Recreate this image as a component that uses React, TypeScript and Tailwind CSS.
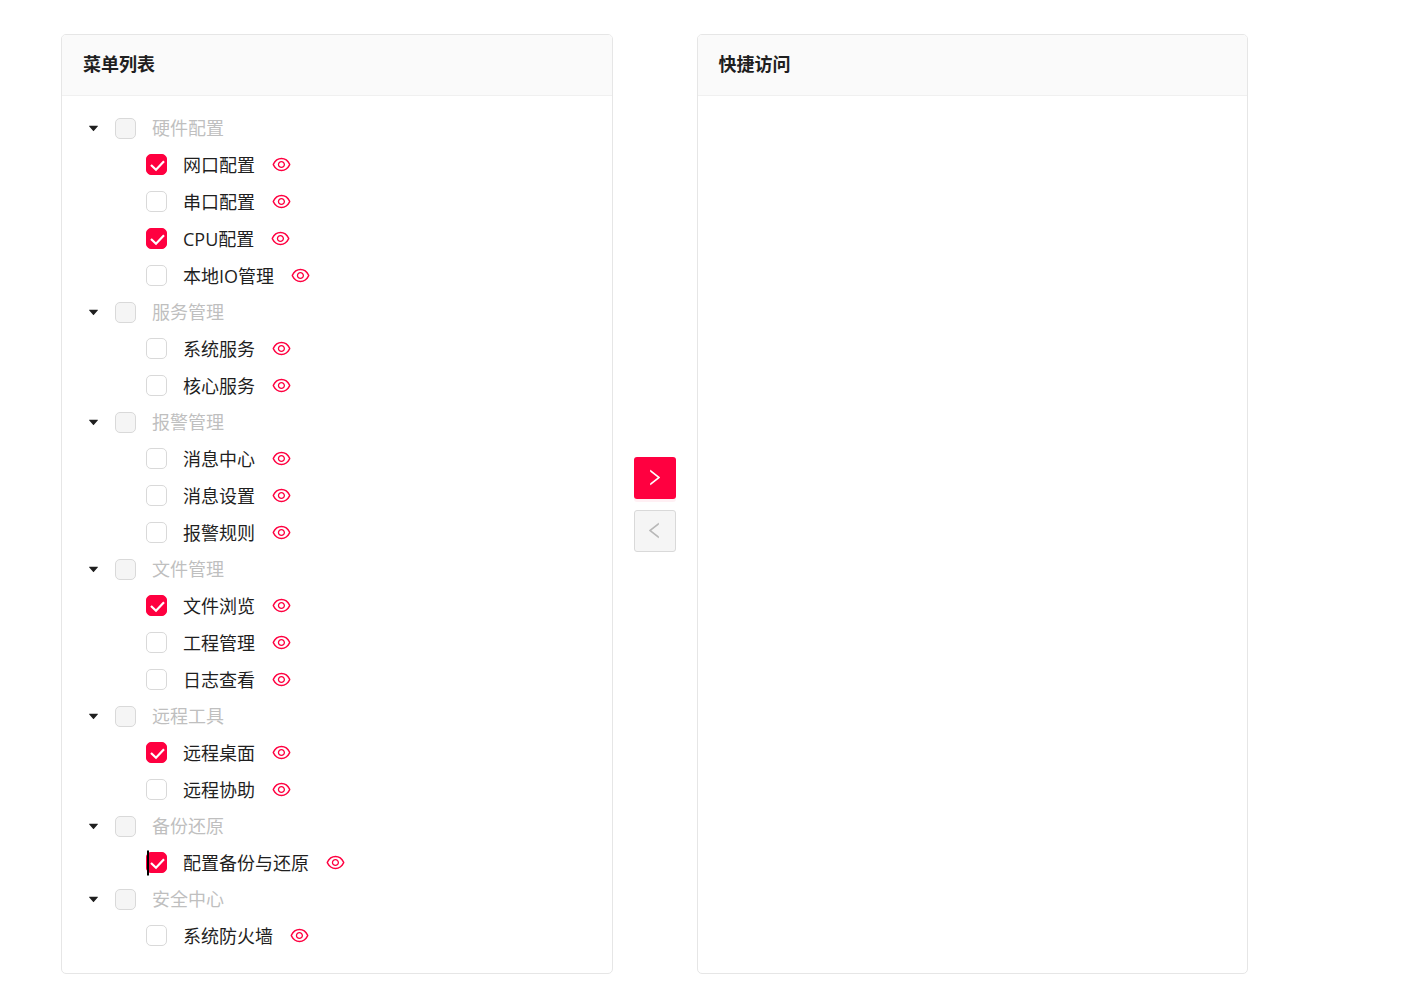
import { useState } from "react";
import { AiFillCaretDown, AiOutlineEye, AiOutlineLeft, AiOutlineRight } from "react-icons/ai";

type MenuGroup = {
  title: string;
  items: string[];
};

const menuGroups: MenuGroup[] = [
  { title: "硬件配置", items: ["网口配置", "串口配置", "CPU配置", "本地IO管理"] },
  { title: "服务管理", items: ["系统服务", "核心服务"] },
  { title: "报警管理", items: ["消息中心", "消息设置", "报警规则"] },
  { title: "文件管理", items: ["文件浏览", "工程管理", "日志查看"] },
  { title: "远程工具", items: ["远程桌面", "远程协助"] },
  { title: "备份还原", items: ["配置备份与还原"] },
  { title: "安全中心", items: ["系统防火墙"] },
];

const caretItem = "配置备份与还原";

function CheckBox({ id, checked, disabled, onChange }: {
  id: string;
  checked: boolean;
  disabled?: boolean;
  onChange?: () => void;
}) {
  return (
    <span className="relative flex shrink-0">
      <input
        id={id}
        type="checkbox"
        checked={checked}
        disabled={disabled}
        readOnly={!onChange}
        onChange={onChange}
        className="peer size-[21px] appearance-none rounded-[5px] border border-[#d9d9d9] bg-white checked:border-[#ff0040] checked:bg-[#ff0040] disabled:bg-[#f5f5f5]"
      />
      <svg
        viewBox="0 0 21 21"
        className="pointer-events-none absolute inset-0 hidden size-[21px] peer-checked:block"
        fill="none"
        stroke="#fff"
        strokeWidth="2.2"
      >
        <path d="M5 11l5 4.8 8-8.6" />
      </svg>
    </span>
  );
}

function Panel({ title, children }: { title: string; children?: React.ReactNode }) {
  return (
    <section className="min-w-0 flex-1 overflow-hidden rounded-[5px] border border-[#e6e6e6] bg-white">
      <h2 className="border-b border-[#f0f0f0] bg-[#fafafa] px-[21px] pt-[15px] pb-[17px] text-lg leading-7 font-bold">{title}</h2>
      {children}
    </section>
  );
}

export default function App() {
  const [checked, setChecked] = useState<string[]>(["网口配置", "CPU配置", "文件浏览", "远程桌面", "配置备份与还原"]);
  const [closed, setClosed] = useState<string[]>([]);

  const toggle = (list: string[], name: string) =>
    list.includes(name) ? list.filter((n) => n !== name) : [...list, name];

  return (
    <main className="flex bg-white pt-[34px] pr-[178px] pb-4 pl-[61px] font-['Open_Sans','Noto_Sans_CJK_SC',sans-serif] text-[#1f1f1f]">
      <Panel title="菜单列表">
        <ul className="pt-[14px] pb-[19px] text-lg leading-7">
          {menuGroups.map((group) => (
            <li key={group.title}>
              <div className="flex h-9 items-center pl-[21px]">
                <button
                  type="button"
                  aria-label={group.title}
                  onClick={() => setClosed(toggle(closed, group.title))}
                  className="mr-[11px] flex size-[21px] items-center justify-center"
                >
                  <AiFillCaretDown size={13} />
                </button>
                <CheckBox id={group.title} checked={false} disabled />
                <label htmlFor={group.title} className="ml-4 text-[#bfbfbf]">{group.title}</label>
              </div>
              {!closed.includes(group.title) && (
                <ul>
                  {group.items.map((item) => (
                    <li key={item} className="relative flex h-[37px] items-center pl-[84px]">
                      <CheckBox
                        id={item}
                        checked={checked.includes(item)}
                        onChange={() => setChecked(toggle(checked, item))}
                      />
                      {item === caretItem && (
                        <span className="absolute top-1/2 left-[85px] h-[25px] w-[2px] -translate-y-1/2 bg-black" />
                      )}
                      <label htmlFor={item} className="ml-4">{item}</label>
                      <button type="button" aria-label={item} className="ml-4 text-[#ff0040]">
                        <AiOutlineEye size={21} />
                      </button>
                    </li>
                  ))}
                </ul>
              )}
            </li>
          ))}
        </ul>
      </Panel>

      <div className="mx-[21px] flex flex-col justify-center gap-[11px]">
        <button
          type="button"
          aria-label="添加"
          className="flex size-[42px] items-center justify-center rounded-[3px] bg-[#ff0040] text-white shadow-[0_3px_0_rgba(255,0,64,0.06)]"
        >
          <AiOutlineRight size={21} />
        </button>
        <button
          type="button"
          aria-label="移除"
          disabled
          className="flex size-[42px] items-center justify-center rounded-[3px] border border-[#d9d9d9] bg-[#f5f5f5] text-[#b8b8b8]"
        >
          <AiOutlineLeft size={21} />
        </button>
      </div>

      <Panel title="快捷访问" />
    </main>
  );
}
